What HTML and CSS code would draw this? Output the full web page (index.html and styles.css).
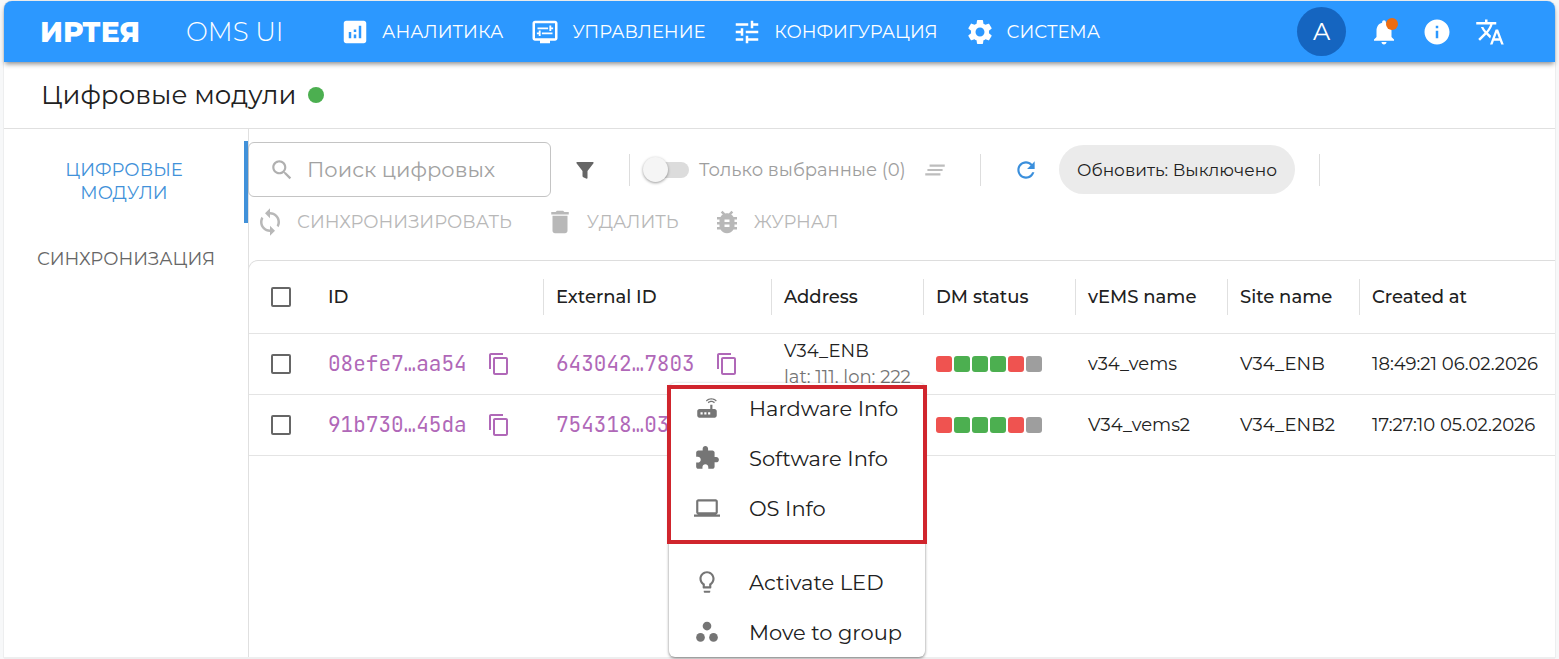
FILE: index.html
```html
<!DOCTYPE html>
<html lang="ru">
<head>
  <meta charset="utf-8">
  <title>OMS UI</title>
  <link rel="stylesheet" href="styles.css">
</head>
<body>
  <!-- Icons -->
  <svg class="sprite" aria-hidden="true">
    <symbol id="analytics" viewBox="0 0 24 24"><path d="M19 3H5c-1.1 0-2 .9-2 2v14c0 1.1.9 2 2 2h14c1.1 0 2-.9 2-2V5c0-1.1-.9-2-2-2zM9 17H7v-5h2v5zm4 0h-2v-3h2v3zm0-5h-2v-2h2v2zm4 5h-2V7h2v10z"/></symbol>
    <symbol id="display" viewBox="0 0 24 24"><path d="M20 3H4c-1.1 0-2 .9-2 2v12c0 1.1.9 2 2 2h4v2h8v-2h4c1.1 0 2-.9 2-2V5c0-1.1-.9-2-2-2zm0 14H4V5h16v12zM6 8.3h8.5v1.4H6zM15.5 6.8h1.5v1.5h1.5v1.4H17v1.5h-1.5zM9.5 12.3H18v1.4H9.5zM7 10.8h1.5v4.400H7v-1.5H5.5v-1.4H7z"/></symbol>
    <symbol id="tune" viewBox="0 0 24 24"><path d="M3 17v2h6v-2H3zM3 5v2h10V5H3zm10 16v-2h8v-2h-8v-2h-2v6h2zM7 9v2H3v2h4v2h2V9H7zm14 4v-2H11v2h10zm-6-4h2V7h4V5h-4V3h-2v6z"/></symbol>
    <symbol id="gear" viewBox="0 0 24 24"><path d="M19.14 12.94c.04-.3.06-.61.06-.94 0-.32-.02-.64-.07-.94l2.03-1.58c.18-.14.23-.41.12-.61l-1.92-3.32c-.12-.22-.37-.29-.59-.22l-2.39.96c-.5-.38-1.03-.7-1.62-.94l-.36-2.54c-.04-.24-.24-.41-.48-.41h-3.84c-.24 0-.43.17-.47.41l-.36 2.54c-.59.24-1.13.57-1.62.94l-2.39-.96c-.22-.08-.47 0-.59.22L2.74 8.870c-.12.21-.08.47.12.61l2.03 1.58c-.05.3-.09.63-.09.94s.02.64.07.94l-2.03 1.58c-.18.14-.23.41-.12.61l1.92 3.32c.12.22.37.29.59.22l2.39-.96c.5.38 1.03.7 1.62.94l.36 2.54c.05.24.24.41.48.41h3.84c.24 0 .44-.17.47-.41l.36-2.54c.59-.24 1.13-.56 1.62-.94l2.39.96c.22.08.47 0 .59-.22l1.92-3.32c.12-.22.07-.47-.12-.61l-2.01-1.58zM12 15.6c-1.98 0-3.6-1.62-3.6-3.6s1.62-3.6 3.6-3.6 3.6 1.62 3.6 3.6-1.62 3.6-3.6 3.6z"/></symbol>
    <symbol id="bell" viewBox="0 0 24 24"><path d="M12 22c1.1 0 2-.9 2-2h-4c0 1.1.89 2 2 2zm6-6v-5c0-3.07-1.64-5.64-4.5-6.32V4c0-.83-.67-1.5-1.5-1.5s-1.5.67-1.5 1.5v.68C7.63 5.36 6 7.92 6 11v5l-2 2v1h16v-1l-2-2z"/></symbol>
    <symbol id="info" viewBox="0 0 24 24"><path d="M12 2C6.48 2 2 6.48 2 12s4.48 10 10 10 10-4.48 10-10S17.52 2 12 2zm1 15h-2v-6h2v6zm0-8h-2V7h2v2z"/></symbol>
    <symbol id="translate" viewBox="0 0 24 24"><path d="M12.87 15.07l-2.54-2.51.03-.03c1.74-1.94 2.98-4.17 3.71-6.53H17V4h-7V2H8v2H1v1.99h11.17C11.5 7.92 10.44 9.75 9 11.35 8.07 10.32 7.3 9.19 6.69 8h-2c.73 1.63 1.73 3.17 2.98 4.56l-5.09 5.02L4 19l5-5 3.11 3.11.76-2.04zM18.5 10h-2L12 22h2l1.12-3h4.75L21 22h2l-4.5-12zm-2.62 7l1.62-4.33L19.12 17h-3.24z"/></symbol>
    <symbol id="search" viewBox="0 0 24 24"><path d="M15.5 14h-.79l-.28-.27C15.41 12.59 16 11.11 16 9.5 16 5.91 13.09 3 9.5 3S3 5.91 3 9.5 5.91 16 9.5 16c1.61 0 3.09-.59 4.23-1.57l.27.28v.79l5 4.99L20.49 19l-4.99-5zm-6 0C7.01 14 5 11.99 5 9.5S7.01 5 9.5 5 14 7.01 14 9.5 11.99 14 9.5 14z"/></symbol>
    <symbol id="filter" viewBox="0 0 24 24"><path d="M4 4h16c.6 0 .8.8.5 1.3L14.5 13v7c0 .5-.3.8-.8.8l-3.4-1.6c-.5-.2-.8-.6-.8-1.1V13L3.5 5.3C3.2 4.8 3.4 4 4 4z"/></symbol>
    <symbol id="clear" viewBox="0 0 24 24"><path d="M5 13h14v-2H5v2zm-2 4h14v-2H3v2zM7 7v2h14V7H7z"/></symbol>
    <symbol id="refresh" viewBox="0 0 24 24"><path d="M17.65 6.35C16.2 4.9 14.21 4 12 4c-4.42 0-7.99 3.58-7.99 8s3.57 8 7.99 8c3.73 0 6.84-2.55 7.73-6h-2.08c-.82 2.33-3.04 4-5.65 4-3.31 0-6-2.69-6-6s2.69-6 6-6c1.66 0 3.14.69 4.22 1.78L13 11h7V4l-2.35 2.35z"/></symbol>
    <symbol id="sync" viewBox="0 0 24 24"><path d="M12 4V1L8 5l4 4V6c3.31 0 6 2.69 6 6 0 1.01-.25 1.97-.7 2.8l1.46 1.46C19.54 15.03 20 13.57 20 12c0-4.42-3.58-8-8-8zm0 14c-3.31 0-6-2.69-6-6 0-1.01.25-1.97.7-2.8L5.24 7.74C4.46 8.97 4 10.43 4 12c0 4.42 3.58 8 8 8v3l4-4-4-4v3z"/></symbol>
    <symbol id="trash" viewBox="0 0 24 24"><path d="M6 19c0 1.1.9 2 2 2h8c1.1 0 2-.9 2-2V7H6v12zM19 4h-3.5l-1-1h-5l-1 1H5v2h14V4z"/></symbol>
    <symbol id="bug" viewBox="0 0 24 24"><path d="M20 8h-2.81c-.45-.78-1.07-1.45-1.82-1.96L17 4.41 15.59 3l-2.17 2.17C12.96 5.06 12.49 5 12 5s-.96.06-1.41.17L8.41 3 7 4.41l1.62 1.63C7.88 6.55 7.26 7.22 6.81 8H4v2h2.09c-.05.33-.09.66-.09 1v1H4v2h2v1c0 .34.04.67.09 1H4v2h2.81c1.04 1.79 2.97 3 5.19 3s4.15-1.21 5.19-3H20v-2h-2.09c.05-.33.09-.66.09-1v-1h2v-2h-2v-1c0-.34-.04-.67-.09-1H20V8zm-6 8h-4v-2h4v2zm0-4h-4v-2h4v2z"/></symbol>
    <symbol id="copy" viewBox="0 0 24 24"><path d="M16 1H4c-1.1 0-2 .9-2 2v14h2V3h12V1zm3 4H8c-1.1 0-2 .9-2 2v14c0 1.1.9 2 2 2h11c1.1 0 2-.9 2-2V7c0-1.1-.9-2-2-2zm0 16H8V7h11v14z"/></symbol>
    <symbol id="router" viewBox="0 0 24 24"><path d="M20.2 5.9l.8-.8C19.6 3.7 17.8 3 16 3s-3.6.7-5 2.1l.8.8C13 4.8 14.5 4.2 16 4.2s3 .6 4.2 1.7zm-.9.8c-.9-.9-2.1-1.4-3.3-1.4s-2.4.5-3.3 1.4l.8.8c.7-.7 1.6-1 2.5-1 .9 0 1.8.3 2.5 1l.8-.8zM19 13h-2V9h-2v4H5c-1.1 0-2 .9-2 2v4c0 1.1.9 2 2 2h14c1.1 0 2-.9 2-2v-4c0-1.1-.9-2-2-2zM8 18H6v-2h2v2zm3.5 0h-2v-2h2v2zm3.5 0h-2v-2h2v2z"/></symbol>
    <symbol id="extension" viewBox="0 0 24 24"><path d="M20.5 11H19V7c0-1.1-.9-2-2-2h-4V3.5C13 2.12 11.88 1 10.5 1S8 2.12 8 3.5V5H4c-1.1 0-1.99.9-1.99 2v3.8H3.5c1.49 0 2.7 1.21 2.7 2.7s-1.21 2.7-2.7 2.7H2V20c0 1.1.9 2 2 2h3.8v-1.5c0-1.49 1.21-2.7 2.7-2.7 1.49 0 2.7 1.21 2.7 2.7V22H17c1.1 0 2-.9 2-2v-4h1.5c1.38 0 2.5-1.12 2.5-2.5S21.88 11 20.5 11z"/></symbol>
    <symbol id="laptop" viewBox="0 0 24 24"><path d="M20 18c1.1 0 1.99-.9 1.99-2L22 6c0-1.1-.9-2-2-2H4c-1.1 0-2 .9-2 2v10c0 1.1.9 2 2 2H0v2h24v-2h-4zM4 6h16v10H4V6z"/></symbol>
    <symbol id="bulb" viewBox="0 0 24 24"><path d="M9 21c0 .55.45 1 1 1h4c.55 0 1-.45 1-1v-1H9v1zm3-19C8.14 2 5 5.14 5 9c0 2.38 1.19 4.47 3 5.74V17c0 .55.45 1 1 1h6c.55 0 1-.45 1-1v-2.26c1.81-1.27 3-3.36 3-5.74 0-3.86-3.14-7-7-7zm2.85 11.1l-.85.6V16h-4v-2.3l-.85-.6C7.8 12.16 7 10.63 7 9c0-2.76 2.24-5 5-5s5 2.24 5 5c0 1.63-.8 3.16-2.15 4.1z"/></symbol>
    <symbol id="group" viewBox="0 0 24 24"><circle cx="12" cy="6.5" r="4"/><circle cx="6" cy="17" r="4"/><circle cx="18" cy="17" r="4"/></symbol>
  </svg>

  <div class="app">
    <header class="topbar">
      <span class="logo">ИРТЕЯ</span>
      <span class="product">OMS UI</span>
      <nav class="main-nav">
        <a href="#"><svg class="icon icon-lg"><use href="#analytics"/></svg>АНАЛИТИКА</a>
        <a href="#"><svg class="icon icon-lg"><use href="#display"/></svg>УПРАВЛЕНИЕ</a>
        <a href="#"><svg class="icon icon-lg"><use href="#tune"/></svg>КОНФИГУРАЦИЯ</a>
        <a href="#"><svg class="icon icon-lg"><use href="#gear"/></svg>СИСТЕМА</a>
      </nav>
      <div class="actions">
        <button class="avatar">A</button>
        <button class="icon-button bell" aria-label="Уведомления"><svg class="icon icon-lg"><use href="#bell"/></svg><span class="badge"></span></button>
        <button class="icon-button" aria-label="Информация"><svg class="icon icon-lg"><use href="#info"/></svg></button>
        <button class="icon-button" aria-label="Язык"><svg class="icon icon-lg"><use href="#translate"/></svg></button>
      </div>
    </header>

    <div class="page-title">
      <h1>Цифровые модули</h1>
      <span class="online"></span>
    </div>

    <div class="body">
      <nav class="sidebar">
        <a href="#" class="tab active">ЦИФРОВЫЕ МОДУЛИ</a>
        <a href="#" class="tab">СИНХРОНИЗАЦИЯ</a>
      </nav>

      <main class="content">
        <div class="toolbar">
          <label class="search">
            <svg class="icon"><use href="#search"/></svg>
            <input type="text" placeholder="Поиск цифровых" aria-label="Поиск цифровых">
          </label>
          <button class="icon-button filter" aria-label="Фильтр"><svg class="icon icon-sm"><use href="#filter"/></svg></button>
          <span class="separator"></span>
          <label class="switch">
            <input type="checkbox" disabled>
            <span>Только выбранные (0)</span>
          </label>
          <button class="icon-button clear" aria-label="Очистить" disabled><svg class="icon"><use href="#clear"/></svg></button>
          <span class="separator"></span>
          <button class="icon-button refresh" aria-label="Обновить"><svg class="icon"><use href="#refresh"/></svg></button>
          <button class="chip">Обновить: Выключено</button>
          <span class="separator"></span>
        </div>

        <div class="bulk">
          <button disabled><svg class="icon icon-lg"><use href="#sync"/></svg>СИНХРОНИЗИРОВАТЬ</button>
          <button disabled><svg class="icon icon-lg"><use href="#trash"/></svg>УДАЛИТЬ</button>
          <button disabled><svg class="icon icon-lg"><use href="#bug"/></svg>ЖУРНАЛ</button>
        </div>

        <div class="grid">
          <table>
            <colgroup>
              <col class="col-check"><col class="col-id"><col class="col-id"><col class="col-mid"><col class="col-mid"><col class="col-mid"><col class="col-site"><col>
            </colgroup>
            <thead>
              <tr>
                <th><input type="checkbox" class="check" aria-label="Выбрать все"></th>
                <th>ID</th>
                <th><span>External ID</span></th>
                <th><span>Address</span></th>
                <th><span>DM status</span></th>
                <th><span>vEMS name</span></th>
                <th><span>Site name</span></th>
                <th><span>Created at</span></th>
              </tr>
            </thead>
            <tbody>
              <tr>
                <td><input type="checkbox" class="check" aria-label="Выбрать 08efe7"></td>
                <td><div class="hash">08efe7…aa54<button class="copy" aria-label="Копировать"><svg class="icon icon-sm"><use href="#copy"/></svg></button></div></td>
                <td><div class="hash">643042…7803<button class="copy" aria-label="Копировать"><svg class="icon icon-sm"><use href="#copy"/></svg></button></div></td>
                <td><div class="address">V34_ENB<small>lat: 111, lon: 222</small></div></td>
                <td><div class="status"><i class="bad"></i><i></i><i></i><i></i><i class="bad"></i><i class="off"></i></div></td>
                <td>v34_vems</td>
                <td>V34_ENB</td>
                <td>18:49:21 06.02.2026</td>
              </tr>
              <tr>
                <td><input type="checkbox" class="check" aria-label="Выбрать 91b730"></td>
                <td><div class="hash">91b730…45da<button class="copy" aria-label="Копировать"><svg class="icon icon-sm"><use href="#copy"/></svg></button></div></td>
                <td><div class="hash">754318…03</div></td>
                <td></td>
                <td><div class="status"><i class="bad"></i><i></i><i></i><i></i><i class="bad"></i><i class="off"></i></div></td>
                <td>V34_vems2</td>
                <td>V34_ENB2</td>
                <td>17:27:10 05.02.2026</td>
              </tr>
            </tbody>
          </table>
        </div>
      </main>
    </div>
  </div>

  <!-- Context menu -->
  <div class="menu" role="menu">
    <div class="menu-group">
      <button role="menuitem"><svg class="icon"><use href="#router"/></svg>Hardware Info</button>
      <button role="menuitem"><svg class="icon"><use href="#extension"/></svg>Software Info</button>
      <button role="menuitem"><svg class="icon"><use href="#laptop"/></svg>OS Info</button>
    </div>
    <div class="menu-group">
      <button role="menuitem"><svg class="icon"><use href="#bulb"/></svg>Activate LED</button>
      <button role="menuitem"><svg class="icon"><use href="#group"/></svg>Move to group</button>
    </div>
    <div class="frame"></div>
  </div>
</body>
</html>
```
FILE: styles.css
```css
* {
  box-sizing: border-box;
}

body {
  margin: 0;
  padding: 1px 4px;
  min-height: 100vh;
  display: flex;
  background-color: #f7f8f9;
  color: #212121;
  font-family: Montserrat, Inter, sans-serif;
  font-size: 18px;
}

button {
  padding: 0;
  border: none;
  background: none;
  color: inherit;
  font: inherit;
  cursor: pointer;
}

a {
  color: inherit;
  text-decoration: none;
}

.sprite {
  position: absolute;
  width: 0;
  height: 0;
}

.icon {
  width: 26px;
  height: 26px;
  flex: none;
  display: block;
  fill: currentColor;
}

.icon-lg {
  width: 30px;
  height: 30px;
}

.icon-sm {
  width: 24px;
  height: 24px;
}

.app {
  flex: 1;
  min-width: 0;
  display: flex;
  flex-direction: column;
  background-color: #fff;
  border-bottom: 1px solid #eee;
  border-radius: 8px 8px 0 0;
  box-shadow: 0 0 1px rgba(0, 0, 0, 0.4);
}

/* Top bar */
.topbar {
  height: 61px;
  padding: 0 50px 0 36px;
  display: flex;
  align-items: center;
  background-color: #2c98ff;
  color: #fff;
  border-radius: 8px 8px 0 0;
  box-shadow: 0 3px 5px -1px rgba(0, 0, 0, 0.45);
}

.logo {
  width: 146px;
  font-size: 28px;
  font-weight: 800;
}

.product {
  width: 154px;
  font-size: 26px;
  font-weight: 300;
}

.main-nav {
  display: flex;
  gap: 27px;
}

.main-nav a {
  display: flex;
  align-items: center;
  gap: 12px;
}

.actions {
  margin-left: auto;
  display: flex;
  align-items: center;
  gap: 23px;
}

.avatar {
  width: 49px;
  height: 49px;
  border-radius: 50%;
  background-color: #1565c0;
  font-size: 24px;
}

.icon-button {
  display: flex;
}

.bell {
  position: relative;
}

.badge {
  position: absolute;
  top: 1px;
  right: 1px;
  width: 12px;
  height: 12px;
  border-radius: 50%;
  background-color: #ed6c10;
}

/* Page title */
.page-title {
  height: 67px;
  padding-left: 37px;
  display: flex;
  align-items: center;
  gap: 12px;
  border-bottom: 1px solid #e0e0e0;
}

h1 {
  margin: 0;
  font-size: 26px;
  font-weight: 400;
}

.online {
  width: 16px;
  height: 16px;
  border-radius: 50%;
  background-color: #4caf50;
}

/* Sidebar */
.body {
  flex: 1;
  display: flex;
}

.sidebar {
  width: 245px;
  flex: none;
  padding-top: 12px;
  border-right: 1px solid #e0e0e0;
  color: #666;
}

.tab {
  min-height: 72px;
  padding: 18px 32px;
  display: flex;
  align-items: center;
  justify-content: center;
  text-align: center;
  line-height: 23px;
}

.tab.active {
  color: #4191d9;
  border-right: 4px solid #4191d9;
}

.content {
  flex: 1;
  min-width: 0;
  margin-left: -1px;
  padding-top: 13px;
}

/* Toolbar */
.toolbar {
  height: 55px;
  display: flex;
  align-items: center;
}

.search {
  width: 303px;
  height: 55px;
  padding: 0 16px 0 20px;
  display: flex;
  align-items: center;
  gap: 12px;
  border: 1px solid #c4c4c4;
  border-radius: 6px;
  color: #b0b0b0;
}

.search input {
  flex: 1;
  min-width: 0;
  padding: 0;
  border: none;
  outline: none;
  font: inherit;
  font-size: 21px;
}

.search input::placeholder {
  color: #a2a2a2;
}

.filter {
  margin: 0 32px 0 22px;
  color: #666;
}

.separator {
  width: 1px;
  height: 32px;
  background-color: #ddd;
}

.switch {
  margin-left: 15px;
  width: 264px;
  display: flex;
  align-items: center;
  gap: 10px;
  color: #9e9e9e;
}

.switch input {
  appearance: none;
  width: 44px;
  height: 16px;
  margin: 0;
  display: flex;
  align-items: center;
  border-radius: 8px;
  background-color: #dcdcdc;
}

.switch input::before {
  content: "";
  width: 25px;
  height: 25px;
  margin-left: -2px;
  border-radius: 50%;
  background-color: #f5f5f5;
  box-shadow: 0 1px 3px rgba(0, 0, 0, 0.4);
}

.clear {
  margin: 0 32px 0 13px;
  color: #bdbdbd;
}

.refresh {
  margin: 0 20px 0 32px;
  color: #3a8fdc;
}

.chip {
  width: 236px;
  height: 49px;
  margin-right: 24px;
  border-radius: 25px;
  background-color: #ebebeb;
  font-size: 17px;
}

.bulk {
  height: 63px;
  padding: 10px 0 0 7px;
  display: flex;
  align-items: flex-start;
  gap: 33px;
  color: #b8b8b8;
}

.bulk button {
  display: flex;
  align-items: center;
  gap: 12px;
}

/* Table */
.grid {
  border-top: 1px solid #ddd;
  border-left: 1px solid #e0e0e0;
  border-radius: 10px 0 0 0;
}

table {
  width: 100%;
  table-layout: fixed;
  border-collapse: collapse;
}

.col-check {
  width: 66px;
}

.col-id {
  width: 228px;
}

.col-mid {
  width: 152px;
}

.col-site {
  width: 132px;
}

th, td {
  height: 61px;
  padding: 0 0 0 13px;
  border-bottom: 1px solid #e4e4e4;
  text-align: left;
  white-space: nowrap;
}

th {
  height: 72px;
  padding: 0;
  font-weight: 500;
}

th:nth-child(2) {
  padding-left: 13px;
}

th span {
  display: block;
  padding-left: 12px;
  line-height: 36px;
  border-left: 1px solid #e0e0e0;
}

th:first-child, td:first-child {
  padding-left: 22px;
}

.check {
  appearance: none;
  display: block;
  width: 20px;
  height: 20px;
  margin: 0;
  border: 2px solid #666;
  border-radius: 2px;
}

.hash {
  display: flex;
  align-items: center;
  gap: 20px;
  color: #b068b8;
  font-family: "JetBrains Mono", "Liberation Mono", monospace;
  font-size: 21px;
}

.address {
  line-height: 26px;
}

.address small {
  display: block;
  font-size: 18px;
  color: #757575;
}

.status {
  display: flex;
  gap: 2px;
}

.status i {
  width: 16px;
  height: 16px;
  border-radius: 3px;
  background-color: #4caf50;
}

.status .bad {
  background-color: #ef5350;
}

.status .off {
  background-color: #9e9e9e;
}

/* Context menu */
.menu {
  position: absolute;
  top: 383px;
  left: 669px;
  width: 256px;
  background-color: #fff;
  border-radius: 6px;
  box-shadow: 0 1px 3px rgba(0, 0, 0, 0.5);
}

.menu-group + .menu-group {
  margin-top: 24px;
}

.menu button {
  width: 100%;
  height: 50px;
  padding-left: 25px;
  display: flex;
  align-items: center;
  gap: 29px;
  font-size: 21px;
}

.menu .icon {
  color: #757575;
}

.frame {
  position: absolute;
  top: 2px;
  left: -2px;
  right: -2px;
  height: 159px;
  border: 4px solid #d0252d;
  pointer-events: none;
}
```
